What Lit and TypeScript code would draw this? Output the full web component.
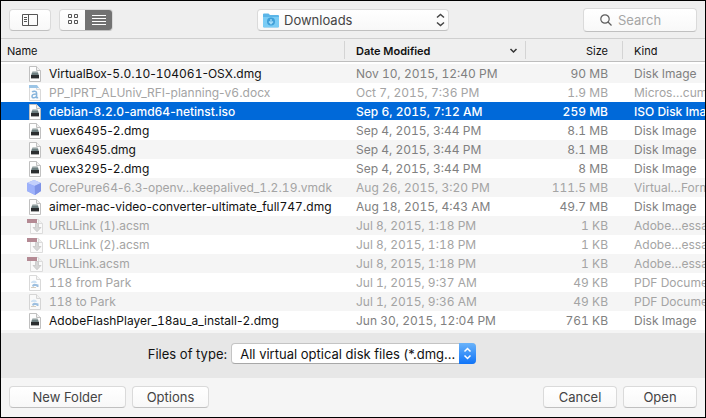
import { LitElement, html, css, svg, nothing } from "lit";
import { customElement, property, state } from "lit/decorators.js";
import { classMap } from "lit/directives/class-map.js";

type IconKind = "disk" | "word" | "cube" | "acsm" | "pdf";

interface FileRow {
  icon: IconKind;
  name: string;
  date: string;
  size: string;
  kind: string;
  disabled?: boolean;
}

const FILES: FileRow[] = [
  { icon: "disk", name: "VirtualBox-5.0.10-104061-OSX.dmg", date: "Nov 10, 2015, 12:40 PM", size: "90 MB", kind: "Disk Image" },
  { icon: "word", name: "PP_IPRT_ALUniv_RFI-planning-v6.docx", date: "Oct 7, 2015, 7:36 PM", size: "1.9 MB", kind: "Micros…cument", disabled: true },
  { icon: "disk", name: "debian-8.2.0-amd64-netinst.iso", date: "Sep 6, 2015, 7:12 AM", size: "259 MB", kind: "ISO Disk Image" },
  { icon: "disk", name: "vuex6495-2.dmg", date: "Sep 4, 2015, 3:44 PM", size: "8.1 MB", kind: "Disk Image" },
  { icon: "disk", name: "vuex6495.dmg", date: "Sep 4, 2015, 3:44 PM", size: "8.1 MB", kind: "Disk Image" },
  { icon: "disk", name: "vuex3295-2.dmg", date: "Sep 4, 2015, 3:44 PM", size: "8 MB", kind: "Disk Image" },
  { icon: "cube", name: "CorePure64-6.3-openv…keepalived_1.2.19.vmdk", date: "Aug 26, 2015, 3:20 PM", size: "111.5 MB", kind: "Virtual…Format", disabled: true },
  { icon: "disk", name: "aimer-mac-video-converter-ultimate_full747.dmg", date: "Aug 18, 2015, 4:43 AM", size: "49.7 MB", kind: "Disk Image" },
  { icon: "acsm", name: "URLLink (1).acsm", date: "Jul 8, 2015, 1:18 PM", size: "1 KB", kind: "Adobe…essage", disabled: true },
  { icon: "acsm", name: "URLLink (2).acsm", date: "Jul 8, 2015, 1:18 PM", size: "1 KB", kind: "Adobe…essage", disabled: true },
  { icon: "acsm", name: "URLLink.acsm", date: "Jul 8, 2015, 1:18 PM", size: "1 KB", kind: "Adobe…essage", disabled: true },
  { icon: "pdf", name: "118 from Park", date: "Jul 1, 2015, 9:37 AM", size: "49 KB", kind: "PDF Document", disabled: true },
  { icon: "pdf", name: "118 to Park", date: "Jul 1, 2015, 9:36 AM", size: "49 KB", kind: "PDF Document", disabled: true },
  { icon: "disk", name: "AdobeFlashPlayer_18au_a_install-2.dmg", date: "Jun 30, 2015, 12:04 PM", size: "761 KB", kind: "Disk Image" },
  { icon: "disk", name: "", date: "", size: "", kind: "" },
];

const page = svg`<path d="M2.5 .5H9.5L13.5 4.5V15.5H2.5Z" fill="#fdfdfd" stroke="#c0c0c0"/>
  <path d="M9.5 .5V4.5H13.5" fill="#f0f0f0" stroke="#c0c0c0"/>`;

const ART = {
  disk: svg`${page}
    <path d="M5.500 5H10.500L11 7H5Z" fill="#c3caca"/>
    <path d="M5 6.500H11L12 9.500H4Z" fill="#6d7e80"/>
    <path d="M4 9H12V12H4Z" fill="#2b2e30"/>
    <path d="M4 12.500H12" stroke="#a8a8a8"/>`,
  word: svg`<g opacity=".6">${page}<path d="M2 0H10L12 3H2Z" fill="#5c9fd6"/></g>
    <g fill="none" stroke="#86b4dc" stroke-width="1.5">
      <path d="M5.2 7.2C6 5.8 9.6 5.6 9.6 8V12.2Q9.8 13 11.2 12.6"/>
      <path d="M9.6 9C7 9 5 9.6 5 11.2C5 13.4 8.6 13.2 9.6 11.4"/>
    </g>`,
  cube: svg`<path d="M7 0L14 3V11L8 15L0 11V3Z" fill="#8ea6f6"/>
    <path d="M7 0L14 3L7.500 6L0 3Z" fill="#c3d0fc"/>
    <path d="M7.500 6L14 3V11L8 15Z" fill="#7f93e6"/>
    <path d="M0 3L7.500 6L8 15L0 11Z" fill="#9db1fa"/>`,
  acsm: svg`<path d="M3.5 1.5H11.5L15.5 5.5V15.5H3.5Z" fill="#fafafa" stroke="#dcdcdc"/>
    <path d="M11.5 1.5V5.5H15.5" fill="#f0f0f0" stroke="#dcdcdc"/>
    <path d="M0 1H10V5H0Z" fill="#b48a94"/>
    <path d="M8.5 5.5H11.5V9.5H14L10 13.8L6 9.5H8.5Z" fill="#d6d6d6" stroke="#c2c2c2" stroke-width=".7"/>`,
  pdf: svg`<g opacity=".6">${page}</g>
    <path d="M4 7Q6 4.500 9 6L10 8H4Z" fill="#cfe2f3"/>
    <path d="M5 10.500Q6 8 9 9L11.500 9.500V12H9.500V11H7.500L6 12Z" fill="#9dbfdf"/>
    <path d="M4 12.500H9" stroke="#d5cdbf"/>`,
};

@customElement("file-icon")
class FileIcon extends LitElement {
  @property() kind: IconKind = "disk";

  static styles = css`
    :host { display: block; width: 16px; height: 16px; flex: none; }
    svg { display: block; }
  `;

  render() {
    return html`<svg width="16" height="16" viewBox="0 0 16 16" aria-hidden="true">${ART[this.kind]}</svg>`;
  }
}

@customElement("app-root")
class AppRoot extends LitElement {
  @state() private selected = 2;
  @state() private view = "list";

  static styles = css`
    :host {
      display: flex;
      flex-direction: column;
      box-sizing: border-box;
      height: 100vh;
      border: 1px solid #000;
      background: #f5f5f5;
      color: #111;
      font: 12px/16px Inter, "Liberation Sans", sans-serif;
    }
    * { box-sizing: border-box; }
    button, input, select { font: inherit; color: inherit; margin: 0; }
    svg { display: block; }

    .toolbar {
      display: grid;
      grid-template-columns: 1fr auto 1fr;
      align-items: center;
      flex: none;
      height: 38px;
      padding: 0 8px;
      background: #efefef;
      border-bottom: 1px solid #cfcfcf;
    }
    .tools { display: flex; gap: 8px; }
    .btn, .segments, .popup, .search {
      height: 22px;
      background: linear-gradient(#fff, #f8f8f8);
      border: 1px solid #dadada;
      border-bottom-color: #c0c0c0;
      border-radius: 4px;
    }
    .btn {
      display: flex;
      align-items: center;
      justify-content: center;
      padding: 0;
      color: #444;
      font-size: 13px;
    }
    .side { width: 42px; }
    .segments { display: flex; overflow: hidden; }
    .segment {
      display: flex;
      align-items: center;
      justify-content: center;
      width: 26px;
      padding: 0;
      border: 0;
      background: none;
      color: #555;
    }
    .segment.on { margin: -1px; width: 28px; background: #727272; color: #fff; }

    .field { position: relative; display: block; }
    .field svg { position: absolute; pointer-events: none; }
    .popup {
      appearance: none;
      display: block;
      width: 192px;
      padding: 0 24px 0 26px;
      color: #444;
      font-size: 13px;
    }
    .folder { left: 6px; top: 4px; }
    .updown { right: 4px; top: 4px; }
    .search {
      display: block;
      width: 114px;
      height: 24px;
      padding: 0 8px 0 34px;
      outline: none;
      font-size: 13px;
    }
    .search::placeholder { color: #a6a6a6; opacity: 1; }
    .finder { justify-self: end; }
    .lens { left: 17px; top: 6px; }

    .list {
      flex: 1;
      min-height: 0;
      overflow: hidden auto;
      scrollbar-width: none;
      background: #fff;
    }
    .files { width: 100%; table-layout: fixed; border-collapse: separate; border-spacing: 0; }
    .c-date { width: 181px; }
    .c-size { width: 97px; }
    .c-kind { width: 83px; }
    th {
      position: sticky;
      top: 0;
      z-index: 1;
      height: 25px;
      padding: 0 0 0 12px;
      border-bottom: 2px solid #fff;
      background: linear-gradient(#d4d4d4, #d4d4d4) 0 2px / 1px 18px no-repeat, #efefef;
      box-shadow: inset 0 -1px #bebebe;
      text-align: left;
      font-weight: 400;
      font-size: 11px;
      white-space: nowrap;
    }
    th:first-child { padding-left: 6px; background: #efefef; }
    th.sorted { font-weight: 600; }
    .sort { display: flex; justify-content: space-between; align-items: center; padding-right: 7px; }
    td {
      height: 19px;
      padding: 0 0 0 12px;
      overflow: hidden;
      white-space: nowrap;
      color: #808080;
      font-variant-numeric: tabular-nums;
    }
    td:first-child { padding-left: 26px; color: #111; }
    th.size, td.size { text-align: right; padding: 0 14px 0 0; }
    tr:nth-child(odd) td { background: #f5f5f5; }
    tr.disabled td, tr.disabled td:first-child { color: #a4a4a4; }
    tbody tr.selected td, tbody tr.selected td:first-child {
      background: #0069d9;
      box-shadow: inset 0 -1px #fff;
      color: #fff;
      font-weight: 500;
    }
    .name { display: flex; align-items: center; gap: 6px; font-variant-numeric: normal; }
    .digits { font-variant-numeric: tabular-nums; }

    .accessory {
      display: flex;
      align-items: center;
      justify-content: center;
      gap: 4px;
      flex: none;
      height: 48px;
      padding: 0 82px 4px 0;
      border-top: 3px solid #f5f5f5;
      background: #e7e7e7;
      color: #111;
      font-size: 13px;
    }
    .type {
      appearance: none;
      display: block;
      width: 245px;
      height: 21px;
      padding: 0 18px 0 8px;
      border: 1px solid #c4c4c4;
      border-bottom-color: #a8a8a8;
      border-radius: 4px;
      background: #fff;
    }
    .cap { right: 0; top: 0; }

    .footer {
      display: flex;
      justify-content: space-between;
      align-items: center;
      flex: none;
      height: 39px;
      padding: 0 8px 1px;
    }
    .group { display: flex; gap: 6px; }
    .wide { width: 117px; }
    .mid { width: 77px; }
    .small { width: 74px; }
  `;

  // Digit runs get even-width figures, while the punctuation between them stays proportional.
  private renderName(name: string) {
    return name.split(/(\d+)/).map((part, i) => (i % 2 ? html`<span class="digits">${part}</span>` : part));
  }

  private renderRow(file: FileRow, index: number) {
    return html`<tr
      class=${classMap({ disabled: !!file.disabled, selected: index === this.selected })}
      @click=${file.disabled ? nothing : () => (this.selected = index)}
    >
      <td><div class="name"><file-icon .kind=${file.icon}></file-icon><span>${this.renderName(file.name)}</span></div></td>
      <td>${file.date}</td>
      <td class="size">${file.size}</td>
      <td>${file.kind}</td>
    </tr>`;
  }

  render() {
    return html`
      <div class="toolbar">
        <div class="tools">
          <button class="btn side" aria-label="Toggle sidebar">
            <svg width="16" height="12" viewBox="0 0 16 12" fill="none" stroke="#555">
              <path d="M.5 .5H15.5V11.500H.5ZM6.500 .5V11.500M2 3.500H5M2 5.500H5M2 7.500H5" />
            </svg>
          </button>
          <div class="segments">
            <button
              class=${classMap({ segment: true, on: this.view === "icons" })}
              aria-label="Icon view"
              @click=${() => (this.view = "icons")}
            >
              <svg width="11" height="11" viewBox="0 0 11 11" fill="none" stroke="currentColor">
                <path d="M.5 .5H3.500V3.500H.5ZM6.500 .5H9.500V3.500H6.500ZM.5 6.500H3.500V9.500H.5ZM6.500 6.500H9.500V9.500H6.500Z" />
              </svg>
            </button>
            <button
              class=${classMap({ segment: true, on: this.view === "list" })}
              aria-label="List view"
              @click=${() => (this.view = "list")}
            >
              <svg width="14" height="10" viewBox="0 0 14 10" stroke="currentColor">
                <path d="M0 .5H14M0 3.500H14M0 6.500H14M0 9.500H14" />
              </svg>
            </button>
          </div>
        </div>
        <div class="field">
          <select class="popup" aria-label="Folder">
            <option>Downloads</option>
          </select>
          <svg class="folder" width="16" height="15" viewBox="0 0 16 15">
            <path d="M0 1.500Q0 .5 1 .5H5.500L7 2H15Q16 2 16 3V13.500Q16 14.500 15 14.500H1Q0 14.500 0 13.500Z" fill="#5bb5e8" />
            <path d="M0 4H16V13.500Q16 14 15 14H1Q0 14 0 13.500Z" fill="#7accf5" />
            <circle cx="8" cy="8.500" r="4" fill="#3f9fd8" />
            <path d="M8 6V10.500M6 8.500L8 10.700L10 8.500" fill="none" stroke="#a5ddf9" stroke-width="1.300" />
          </svg>
          <svg class="updown" width="9" height="14" viewBox="0 0 9 14" fill="none" stroke="#444" stroke-width="1.500">
            <path d="M1 4.500L4.500 1.500L8 4.500M1 9.500L4.500 12.500L8 9.500" />
          </svg>
        </div>
        <div class="field finder">
          <input class="search" type="text" placeholder="Search" aria-label="Search" />
          <svg class="lens" width="12" height="12" viewBox="0 0 12 12" fill="none" stroke="#5c5c5c" stroke-width="1.200">
            <circle cx="5" cy="5" r="4.200" />
            <path d="M8 8L11.500 11.500" />
          </svg>
        </div>
      </div>

      <div class="list">
        <table class="files">
          <colgroup>
            <col />
            <col class="c-date" />
            <col class="c-size" />
            <col class="c-kind" />
          </colgroup>
          <thead>
            <tr>
              <th scope="col">Name</th>
              <th scope="col" class="sorted" aria-sort="descending">
                <div class="sort">
                  Date Modified
                  <svg width="9" height="6" viewBox="0 0 9 6" fill="none" stroke="#333" stroke-width="1.500">
                    <path d="M1.500 1L4.500 4L7.500 1" />
                  </svg>
                </div>
              </th>
              <th scope="col" class="size">Size</th>
              <th scope="col">Kind</th>
            </tr>
          </thead>
          <tbody>
            ${FILES.map((file, index) => this.renderRow(file, index))}
          </tbody>
        </table>
      </div>

      <div class="accessory">
        <label for="type">Files of type:</label>
        <div class="field">
          <select class="type" id="type">
            <option>All virtual optical disk files (*.dmg...</option>
          </select>
          <svg class="cap" width="17" height="21" viewBox="0 0 17 21">
            <defs>
              <linearGradient id="blue" x2="0" y2="1">
                <stop offset="0" stop-color="#6ab3fa" />
                <stop offset="1" stop-color="#0f74f8" />
              </linearGradient>
            </defs>
            <path d="M0 0H13Q17 0 17 4V17Q17 21 13 21H0Z" fill="url(#blue)" />
            <path d="M5.500 8.500L8.500 5.500L11.500 8.500M5.500 12.500L8.500 15.500L11.500 12.500" fill="none" stroke="#fff" stroke-width="1.500" />
          </svg>
        </div>
      </div>

      <div class="footer">
        <div class="group">
          <button class="btn wide">New Folder</button>
          <button class="btn mid">Options</button>
        </div>
        <div class="group">
          <button class="btn small">Cancel</button>
          <button class="btn small">Open</button>
        </div>
      </div>
    `;
  }
}
